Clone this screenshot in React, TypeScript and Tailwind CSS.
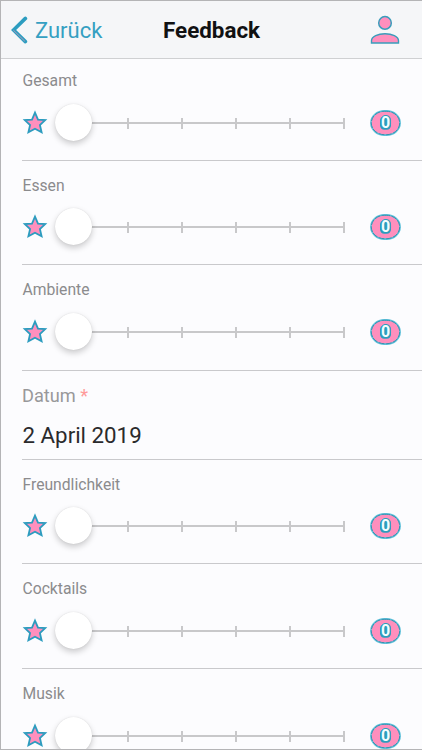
import React from 'react';

type SliderRowProps = {
    label: string;
    // row height incl. divider, and the space above the label and the slider
    height: string;
    labelTop: string;
    sliderTop: string;
};

const StarIcon: React.FC = () => (
    <svg width="26" height="26" viewBox="0 0 26 26" className="shrink-0">
        <path
            d="M13 2.6 L16 9.6 L23.2 10.1 L17.9 15 L19.6 22.3 L13 18.7 L6.4 22.3 L8.1 15 L2.8 10.1 L10 9.6 Z"
            fill="#ff8fbd"
            stroke="#2c9cbf"
            strokeWidth="1.8"
        />
    </svg>
);

const PersonIcon: React.FC = () => (
    <svg width="30" height="30" viewBox="0 0 30 30">
        <circle cx="15" cy="7.9" r="6.3" fill="#ff8fbd" stroke="#3a9dbb" strokeWidth="1.5" />
        <path
            d="M1.5 28 V25.8 C1.5 21.5 8 18.8 15 18.8 S28.5 21.5 28.5 25.8 V28 Z"
            fill="#ff8fbd"
            stroke="#3a9dbb"
            strokeWidth="1.4"
        />
    </svg>
);

const BackIcon: React.FC = () => (
    <svg width="18" height="28" viewBox="0 0 18 28">
        <path d="M15.4 2.4 L3.6 14 L15.4 25.6" fill="none" stroke="#2c9dc0" strokeWidth="3.6" strokeLinecap="round" />
        <path d="M3.4 14.2 L14.8 25.2" fill="none" stroke="#c49abb" strokeWidth="0.9" />
    </svg>
);

const Badge: React.FC = () => (
    <div className="relative w-[31px] h-[26px] flex items-center justify-center">
        <svg width="31" height="26" viewBox="0 0 31 26" className="absolute inset-0">
            <rect x="0.9" y="0.9" width="29.2" height="24.2" rx="13.5" ry="12" fill="#ff8fbd" stroke="#5fc3dc" strokeWidth="1.6" />
            <rect x="1.3" y="1.3" width="28.4" height="23.4" rx="13" ry="11.6" fill="none" stroke="#3a8fae" strokeWidth="1" strokeDasharray="6 1.2" />
            <rect x="10" y="6.2" width="11" height="13.6" rx="4.2" fill="#2c9dbd" />
        </svg>
        <span className="relative text-[16px] leading-none font-bold text-[#f2fdff] [-webkit-text-stroke:2px_#2c9dbd] [paint-order:stroke_fill]">0</span>
    </div>
);

const SliderRow: React.FC<SliderRowProps> = ({ label, height, labelTop, sliderTop }) => (
    <div className={`ml-[21px] shrink-0 border-b border-[#c9c9cc] ${height}`}>
        <div className={`pl-[0.5px] text-[15.7px] leading-5 text-[#8b8b8d] ${labelTop}`}>{label}</div>
        <div className={`flex items-center h-[38px] ${sliderTop}`}>
            <StarIcon />
            {/* Track with five ticks and the knob parked at zero */}
            <div className="relative ml-[25px] w-[272px] h-[38px]">
                <div className="absolute left-0 right-0 top-[18px] h-[2px] bg-[#c8c8ca]" />
                <div className="absolute left-[54px] right-0 top-[14px] flex justify-between">
                    <span className="w-[2px] h-[11px] bg-[#c8c8ca]" />
                    <span className="w-[2px] h-[11px] bg-[#c8c8ca]" />
                    <span className="w-[2px] h-[11px] bg-[#c8c8ca]" />
                    <span className="w-[2px] h-[11px] bg-[#c8c8ca]" />
                    <span className="w-[2px] h-[11px] bg-[#c8c8ca]" />
                </div>
                <div className="absolute -left-[18px] top-0 size-[37px] rounded-full bg-white shadow-[0_3px_6px_rgba(0,0,0,0.2),0_0_1px_rgba(0,0,0,0.15)]" />
            </div>
            <div className="ml-[25px]">
                <Badge />
            </div>
        </div>
    </div>
);

const App: React.FC = () => {
    return (
        <div className="w-[422px] h-[750px] overflow-hidden flex flex-col bg-[#fcfcfe] border-t border-l border-b border-[#b4b4b6] font-[Roboto,sans-serif]">
            {/* Toolbar */}
            <header className="h-[58px] shrink-0 flex items-center bg-[#f5f6f8] border-b border-[#cfd0d2]">
                <div className="w-[162px] pl-[9px] flex items-center text-[#35a0c2]">
                    <BackIcon />
                    <span className="ml-[7px] pt-[2px] text-[22px] leading-7 whitespace-nowrap">Zurück</span>
                </div>
                <h1 className="w-[207px] text-[22.4px] leading-7 font-bold text-[#111112] pt-px">Feedback</h1>
                <PersonIcon />
            </header>

            <SliderRow label="Gesamt" height="h-[102px]" labelTop="mt-[12px]" sliderTop="mt-[13px]" />
            <SliderRow label="Essen" height="h-[104px]" labelTop="mt-[15px]" sliderTop="mt-[12px]" />
            <SliderRow label="Ambiente" height="h-[106px]" labelTop="mt-[15px]" sliderTop="mt-[13px]" />

            <div className="ml-[21px] h-[89px] shrink-0 border-b border-[#c9c9cc]">
                <div className="mt-[13px] text-[18.2px] leading-6 text-[#98989a]">
                    Datum <span className="text-[#ff9a9a]">*</span>
                </div>
                <div className="mt-[13px] pl-[0.5px] text-[22.3px] leading-7 text-[#2a2a2c]">2 April 2019</div>
            </div>

            <SliderRow label="Freundlichkeit" height="h-[104px]" labelTop="mt-[15px]" sliderTop="mt-[12px]" />
            <SliderRow label="Cocktails" height="h-[105px]" labelTop="mt-[15px]" sliderTop="mt-[13px]" />
            <SliderRow label="Musik" height="h-[104px]" labelTop="mt-[15px]" sliderTop="mt-[13px]" />
        </div>
    );
};

export default App;
